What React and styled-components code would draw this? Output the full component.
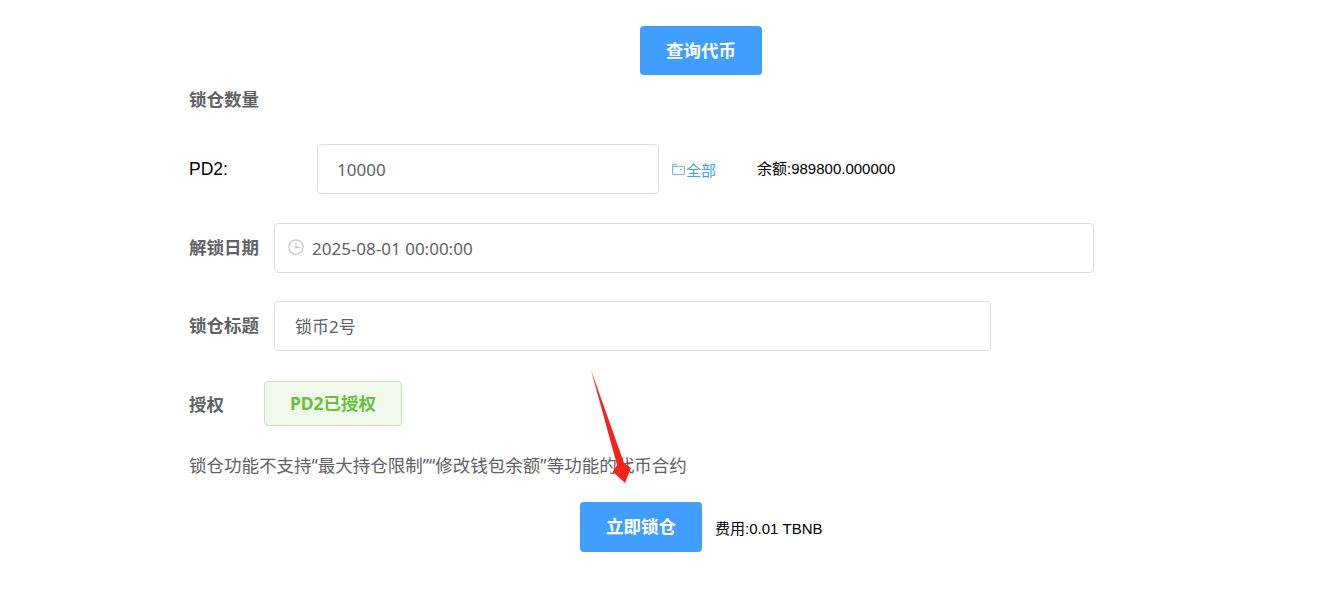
import styled, { createGlobalStyle } from "styled-components";

const GlobalStyle = createGlobalStyle`
  html, body {
    margin: 0;
    padding: 0;
    background: #fff;
  }
  body {
    font-family: "Noto Sans", "Noto Sans CJK SC", sans-serif;
    overflow: hidden;
  }
`

const Page = styled.div`
  position: relative;
  width: 1344px;
  height: 599px;
  padding: 26px 0 0 189px;
  box-sizing: border-box;
`
const Center = styled.div`
  display: flex;
  align-items: center;
  padding-left: ${(p) => p.$left}px;
  margin-top: ${(p) => p.$top || 0}px;
`
const PrimaryButton = styled.button`
  width: 122px;
  height: ${(p) => p.$height}px;
  padding: 0 0 3px;
  border: none;
  border-radius: 4px;
  background: #409eff;
  color: #fff;
  font-family: inherit;
  font-size: 17.5px;
  font-weight: 700;
`
const SectionTitle = styled.div`
  margin-top: 11px;
  height: 26px;
  line-height: 26px;
  font-size: 17.5px;
  font-weight: 700;
  color: #606266;
`
const Row = styled.div`
  display: flex;
  align-items: center;
  height: 50px;
  margin-top: ${(p) => p.$top}px;
`
// labels next to a field sit a little above the row centre
const Label = styled.label`
  flex: none;
  width: ${(p) => p.$width}px;
  margin-bottom: ${(p) => (p.$lift ? 4 : 0)}px;
  font-size: 17.5px;
  font-weight: 700;
  color: #606266;
`
const TokenLabel = styled.label`
  flex: none;
  width: 128px;
  font-family: "Liberation Sans", sans-serif;
  font-size: 17.5px;
  color: #000;
`
const Field = styled.div`
  flex: none;
  display: flex;
  align-items: center;
  box-sizing: border-box;
  width: ${(p) => p.$width}px;
  height: 50px;
  padding-left: ${(p) => p.$pad}px;
  padding-bottom: ${(p) => p.$up || 0}px;
  border: 1px solid #dcdfe6;
  border-radius: 4px;
  font-size: 17px;
  color: #606266;
`
const ClockIcon = styled.svg`
  width: 16px;
  height: 16px;
  margin: 0 8px 3px 0;
  color: #c0c4cc;
`
const AllLink = styled.a`
  display: flex;
  align-items: center;
  margin-left: 12px;
  color: #409eff;
  font-size: 15px;
`
const FolderIcon = styled.svg`
  width: 15px;
  height: 15px;
  opacity: 0.75;
`
const Balance = styled.span`
  margin-left: 41px;
  margin-bottom: 3px;
  font-family: "Liberation Sans", "Noto Sans CJK SC", sans-serif;
  font-size: 15px;
  color: #000;
`
const ApprovedBadge = styled.div`
  box-sizing: border-box;
  width: 138px;
  height: 45px;
  line-height: 43px;
  text-align: center;
  border: 1px solid #c2e7b0;
  border-radius: 4px;
  background: #f0f9eb;
  color: #67c23a;
  font-size: 17.5px;
  font-weight: 700;
`
const Notice = styled.p`
  margin: 22px 0 0;
  height: 30px;
  line-height: 30px;
  font-size: 17.5px;
  color: #606266;
`
const Fee = styled.span`
  margin-left: 13px;
  font-family: "Liberation Sans", "Noto Sans CJK SC", sans-serif;
  font-size: 15px;
  color: #000;
`
const Arrow = styled.svg`
  position: absolute;
  left: 585px;
  top: 365px;
  width: 50px;
  height: 125px;
`

function App() {
  return (
    <Page>
      <GlobalStyle />
      <Center $left={451}>
        <PrimaryButton $height={49}>查询代币</PrimaryButton>
      </Center>
      <SectionTitle>锁仓数量</SectionTitle>
      <Row $top={32}>
        <TokenLabel>PD2:</TokenLabel>
        <Field $width={342} $pad={19}>10000</Field>
        <AllLink>
          <FolderIcon viewBox="0 0 15 15" fill="none" stroke="currentColor" strokeWidth="1">
            <path d="M1.500 2.500v10h12v-8h-7l-1-2z" />
            <path d="M1.500 4.500h5" />
            <path d="M9 7.500h2" />
          </FolderIcon>
          全部
        </AllLink>
        <Balance>余额:989800.000000</Balance>
      </Row>
      <Row $top={29}>
        <Label $width={85} $lift>解锁日期</Label>
        <Field $width={820} $pad={13}>
          <ClockIcon viewBox="0 0 16 16" fill="none" stroke="currentColor" strokeWidth="1.2">
            <circle cx="8" cy="8" r="7.200" />
            <path d="M8 3.800v4.500h3.800" />
          </ClockIcon>
          2025-08-01 00:00:00
        </Field>
      </Row>
      <Row $top={28}>
        <Label $width={85} $lift>锁仓标题</Label>
        <Field $width={717} $pad={20} $up={2}>锁币2号</Field>
      </Row>
      <Row $top={27}>
        <Label $width={75}>授权</Label>
        <ApprovedBadge>PD2已授权</ApprovedBadge>
      </Row>
      <Notice>锁仓功能不支持“最大持仓限制”“修改钱包余额”等功能的代币合约</Notice>
      <Center $left={391} $top={22}>
        <PrimaryButton $height={50}>立即锁仓</PrimaryButton>
        <Fee>费用:0.01 TBNB</Fee>
      </Center>
      <Arrow viewBox="0 0 50 125">
        <path d="M6 5 L32 100 L28 107 L40 118 L46 103 L39 98 Z" fill="#f5231c" />
      </Arrow>
    </Page>
  )
}

export default App
